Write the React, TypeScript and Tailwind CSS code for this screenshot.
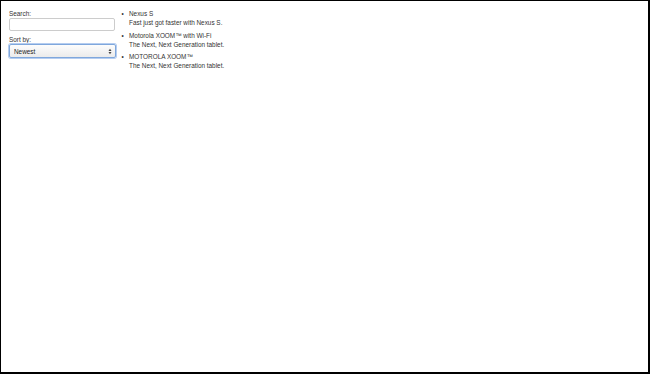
import React, { useState } from 'react';

type Phone = { name: string; snippet: string };

const phones: Phone[] = [
  { name: 'Nexus S', snippet: 'Fast just got faster with Nexus S.' },
  { name: 'Motorola XOOM\u2122 with Wi-Fi', snippet: 'The Next, Next Generation tablet.' },
  { name: 'MOTOROLA XOOM\u2122', snippet: 'The Next, Next Generation tablet.' },
];

export default function App() {
  const [query, setQuery] = useState('');
  const [order, setOrder] = useState('age');

  return (
    <div
      className="h-[374px] w-[650px] box-border border-black border-t border-l border-r-2 border-b-2 bg-white text-[#333] text-[6.4px] leading-[9px]"
      style={{ fontFamily: '"Liberation Sans", Arial, sans-serif' }}
    >
      <div className="flex pt-2 pl-2">
        {/* sidebar */}
        <div className="w-[107px] flex flex-col">
          <label>Search:</label>
          <input
            value={query}
            onChange={(e) => setQuery(e.target.value)}
            className="h-[13px] w-[106px] box-border border border-[#ccc] rounded-[2px] bg-white px-1 outline-none"
          />
          <label className="mt-1">Sort by:</label>
          <div className="relative h-[14px] w-[107px]">
            <select
              value={order}
              onChange={(e) => setOrder(e.target.value)}
              className="appearance-none h-[14px] w-full box-border border border-[#7fa7dc] rounded-[2px] pl-[4px] text-[6.4px] text-[#222] bg-gradient-to-b from-[#fdfdfd] to-[#ebebeb] shadow-[0_0_0_1px_#b5cdf0] outline-none"
            >
              <option value="name">Alphabetical</option>
              <option value="age">Newest</option>
            </select>
            <svg
              className="absolute right-[4px] top-[3.5px] pointer-events-none"
              width="4"
              height="7"
              viewBox="0 0 4 7"
            >
              <path d="M0.5 3 L2 0.8 L3.5 3 Z" fill="#444" />
              <path d="M0.5 4 L2 6.2 L3.5 4 Z" fill="#444" />
            </svg>
          </div>
        </div>

        {/* phone list */}
        <ul className="flex flex-col">
          {phones.map((p, i) => (
            <li key={p.name} className={i > 0 ? 'flex mt-[3.5px]' : 'flex'}>
              <span className="w-[13px] text-center shrink-0">{'\u2022'}</span>
              <div>
                <span>{p.name}</span>
                <p>{p.snippet}</p>
              </div>
            </li>
          ))}
        </ul>
      </div>
    </div>
  );
}
